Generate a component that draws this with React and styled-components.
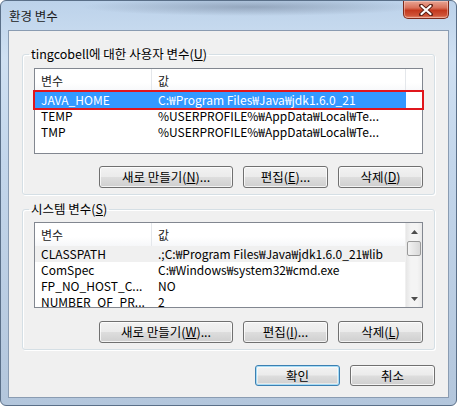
import styled, { createGlobalStyle } from "styled-components"

const GlobalStyle = createGlobalStyle`
    html, body {
        margin: 0;
        padding: 0;
        background: #ffffff;
    }
    body {
        font-family: "Noto Sans CJK KR", "Noto Sans", sans-serif;
        font-size: 12px;
        color: #000;
    }
`

const StyledWindow = styled.div`
    width: 457px;
    height: 406px;
    box-sizing: border-box;
    display: flex;
    flex-direction: column;
    padding: 0 7px 7px 7px;
    border-radius: 6px;
    border: 1px solid #5a6f88;
    background:
        radial-gradient(ellipse 170px 9px at 250px 6px, rgba(70, 82, 105, 0.35), transparent),
        linear-gradient(180deg, #bcd2ea 0%, #cfe0f2 14%, #c3d6eb 40%, #b3c6dc 100%);
    overflow: hidden;
`

const TitleBar = styled.div`
    height: 29px;
    display: flex;
    flex-direction: row;
    justify-content: space-between;
    align-items: flex-start;

    > .title{
        padding: 7px 0 0 1px;
        font-size: 12.5px;
        line-height: 16px;
        color: #1b1b1b;
    }
`

const CloseButton = styled.div`
    width: 46px;
    height: 18px;
    box-sizing: border-box;
    border: 1px solid #7c2a1b;
    border-top: none;
    border-radius: 0 0 5px 5px;
    background: linear-gradient(180deg, #e8a595 0%, #d9715a 40%, #c3381d 55%, #cf5337 85%, #e48f72 100%);
    box-shadow: inset 0 0 0 1px rgba(255, 220, 210, 0.45);
    display: flex;
    align-items: center;
    justify-content: center;

    svg{
        width: 14px;
        height: 12px;
    }
`

const Client = styled.div`
    flex: 1;
    display: flex;
    flex-direction: column;
    background-color: #f0f0f0;
    border: 1px solid #8a9cb2;
    padding: 0 13px;
`

const Group = styled.fieldset`
    margin: ${({ $top }) => $top}px 0 0 0;
    padding: ${({ $padTop }) => $padTop}px 11px 6px 11px;
    border: 1px solid #d5dfe5;
    border-radius: 3px;
    box-shadow: inset 1px 1px 0 #ffffff, 1px 1px 0 #ffffff;
    min-width: 0;

    > legend{
        padding: 0 2px;
        margin-left: -5px;
        font-size: 12.5px;
        line-height: 16px;
        color: #000;
    }
`

const List = styled.div`
    height: 86px;
    box-sizing: border-box;
    border: 1px solid #828790;
    background-color: #ffffff;
    display: grid;
    grid-template-columns: ${({ $scroll }) => ($scroll ? "1fr 17px" : "1fr")};
    overflow: ${({ $clip }) => ($clip ? "hidden" : "visible")};
`

const ListBody = styled.div`
    min-width: 0;
    overflow: ${({ $clip }) => ($clip ? "hidden" : "visible")};
`

const Header = styled.div`
    height: 23px;
    display: grid;
    grid-template-columns: 117px 254px 1fr;
    background: linear-gradient(180deg, #ffffff 0%, #ffffff 60%, #f6f7f9 100%);

    > span{
        padding-left: 6px;
        line-height: 23px;
        border-right: 1px solid #e4e7eb;
        color: #222;
        white-space: nowrap;
        overflow: hidden;
    }

    > span:last-child{
        border-right: none;
    }
`

const Row = styled.div`
    height: 16px;
    display: grid;
    grid-template-columns: 117px 254px 1fr;
    outline: ${({ $marked }) => ($marked ? "2px solid #e0161c" : "none")};
    outline-offset: 0;
    position: relative;

    > span{
        padding-left: 6px;
        line-height: 16px;
        white-space: nowrap;
        overflow: hidden;
        background-color: ${({ $state }) =>
            $state === "active" ? "#3399ff" : $state === "inactive" ? "#f0f0f0" : "transparent"};
        color: ${({ $state }) => ($state === "active" ? "#ffffff" : "#000000")};
    }

    > span:last-child{
        background-color: transparent;
    }
`

const ScrollBar = styled.div`
    display: flex;
    flex-direction: column;
    background: linear-gradient(90deg, #e6e6e6 0%, #f4f4f4 30%, #f4f4f4 70%, #e9e9e9 100%);
    border-left: 1px solid #f0f0f0;

    > .arrow{
        height: 17px;
        display: flex;
        align-items: center;
        justify-content: center;
    }

    > .thumb{
        height: 15px;
        margin: 1px 1px 0 1px;
        box-sizing: border-box;
        border: 1px solid #9a9a9a;
        border-radius: 2px;
        background: linear-gradient(90deg, #f3f3f3 0%, #e6e6e6 50%, #d9d9d9 100%);
    }

    > .track{
        flex: 1;
    }
`

const ButtonRow = styled.div`
    display: flex;
    flex-direction: row;
    justify-content: flex-end;
    gap: ${({ $gap }) => $gap || 10}px;
    margin-top: ${({ $top }) => $top}px;
`

const Button = styled.div`
    width: ${({ $w }) => $w || 85}px;
    height: ${({ $h }) => $h || 22}px;
    box-sizing: border-box;
    border: 1px solid ${({ $default }) => ($default ? "#3c7fb1" : "#707070")};
    border-radius: 3px;
    background: linear-gradient(180deg, #f2f2f2 0%, #ebebeb 48%, #dddddd 52%, #cfcfcf 100%);
    box-shadow: ${({ $default }) =>
        $default ? "inset 0 0 0 1px #a6dcf6, inset 0 0 0 2px rgba(255,255,255,0.5)" : "inset 0 0 0 1px rgba(255,255,255,0.75)"};
    display: flex;
    align-items: center;
    justify-content: center;
    font-size: 12.5px;
    line-height: 14px;
    color: #000;
    white-space: nowrap;

    u{
        text-underline-offset: 1px;
    }
`

const CloseIcon = () => (
    <svg viewBox="0 0 14 12">
        <path d="M2 1.5 L12 10.5 M12 1.5 L2 10.5" stroke="#5b1f14" strokeWidth="4" strokeLinecap="round" />
        <path d="M2.5 2 L11.5 10 M11.5 2 L2.5 10" stroke="#ffffff" strokeWidth="2.2" strokeLinecap="round" />
    </svg>
)

const Arrow = ({ up }) => (
    <svg width="7" height="4" viewBox="0 0 7 4">
        <path d={up ? "M0 4 L3.5 0 L7 4 Z" : "M0 0 L3.5 4 L7 0 Z"} fill="#4d4d4d" />
    </svg>
)

const userVars = [
    { name: "JAVA_HOME", value: "C:₩Program Files₩Java₩jdk1.6.0_21", state: "active", marked: true },
    { name: "TEMP", value: "%USERPROFILE%₩AppData₩Local₩Te..." },
    { name: "TMP", value: "%USERPROFILE%₩AppData₩Local₩Te..." },
]

const systemVars = [
    { name: "CLASSPATH", value: ".;C:₩Program Files₩Java₩jdk1.6.0_21₩lib", state: "inactive" },
    { name: "ComSpec", value: "C:₩Windows₩system32₩cmd.exe" },
    { name: "FP_NO_HOST_C...", value: "NO" },
    { name: "NUMBER_OF_PR...", value: "2" },
]

const VarRows = ({ items }) =>
    items.map((v) => (
        <Row key={v.name} $state={v.state} $marked={v.marked}>
            <span>{v.name}</span>
            <span>{v.value}</span>
            <span></span>
        </Row>
    ))

const ListHeader = () => (
    <Header>
        <span>변수</span>
        <span>값</span>
        <span></span>
    </Header>
)

const App = () => {
    return (
        <>
            <GlobalStyle />
            <StyledWindow>
                <TitleBar>
                    <span className="title">환경 변수</span>
                    <CloseButton>
                        <CloseIcon />
                    </CloseButton>
                </TitleBar>
                <Client>
                    <Group $top={15} $padTop={6}>
                        <legend>tingcobell에 대한 사용자 변수(<u>U</u>)</legend>
                        <List>
                            <ListBody>
                                <ListHeader />
                                <VarRows items={userVars} />
                            </ListBody>
                        </List>
                        <ButtonRow $top={12}>
                            <Button $w={134}>새로 만들기(<u>N</u>)...</Button>
                            <Button>편집(<u>E</u>)...</Button>
                            <Button>삭제(<u>D</u>)</Button>
                        </ButtonRow>
                    </Group>
                    <Group $top={6} $padTop={5}>
                        <legend>시스템 변수(<u>S</u>)</legend>
                        <List $scroll $clip>
                            <ListBody $clip>
                                <ListHeader />
                                <VarRows items={systemVars} />
                            </ListBody>
                            <ScrollBar>
                                <div className="arrow"><Arrow up /></div>
                                <div className="thumb" />
                                <div className="track" />
                                <div className="arrow"><Arrow /></div>
                            </ScrollBar>
                        </List>
                        <ButtonRow $top={13}>
                            <Button $w={134}>새로 만들기(<u>W</u>)...</Button>
                            <Button>편집(<u>I</u>)...</Button>
                            <Button>삭제(<u>L</u>)</Button>
                        </ButtonRow>
                    </Group>
                    <ButtonRow $top={15}>
                        <Button $default $h={21}>확인</Button>
                        <Button $h={21}>취소</Button>
                    </ButtonRow>
                </Client>
            </StyledWindow>
        </>
    )
}

export default App
